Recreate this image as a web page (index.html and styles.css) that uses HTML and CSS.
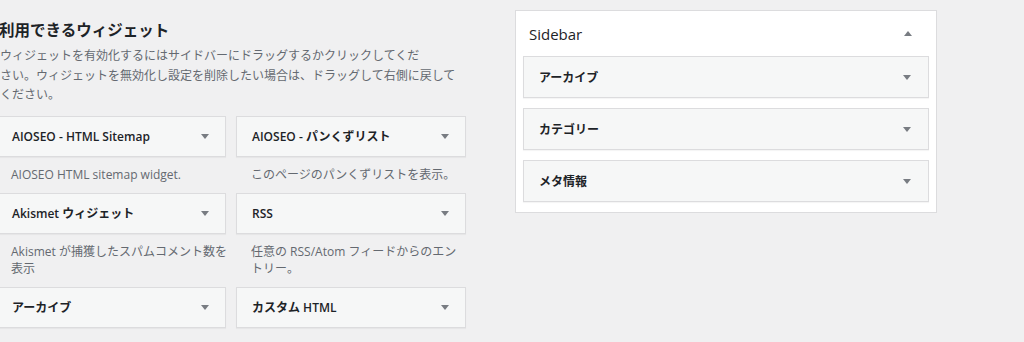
FILE: index.html
```html
<!DOCTYPE html>
<html lang="ja">
<head>
    <meta charset="UTF-8">
    <meta name="viewport" content="width=device-width, initial-scale=1.0">
    <title>ウィジェット</title>
    <link rel="stylesheet" href="styles.css">
</head>
<body>
    <div class="wrap">
        <div class="available">
            <h2 class="section-title">利用できるウィジェット</h2>
            <p class="section-desc">ウィジェットを有効化するにはサイドバーにドラッグするかクリックしてくだ<br>さい。ウィジェットを無効化し設定を削除したい場合は、ドラッグして右側に戻して<br>ください。</p>

            <div class="widget-grid">
                <div class="widget">
                    <div class="widget-top"><span class="widget-name">AIOSEO - HTML Sitemap</span><span class="caret"></span></div>
                    <div class="widget-desc">AIOSEO HTML sitemap widget.</div>
                </div>
                <div class="widget">
                    <div class="widget-top"><span class="widget-name">AIOSEO - パンくずリスト</span><span class="caret"></span></div>
                    <div class="widget-desc">このページのパンくずリストを表示。</div>
                </div>
                <div class="widget">
                    <div class="widget-top"><span class="widget-name">Akismet ウィジェット</span><span class="caret"></span></div>
                    <div class="widget-desc">Akismet が捕獲したスパムコメント数を<br>表示</div>
                </div>
                <div class="widget">
                    <div class="widget-top"><span class="widget-name">RSS</span><span class="caret"></span></div>
                    <div class="widget-desc">任意の RSS/Atom フィードからのエン<br>トリー。</div>
                </div>
                <div class="widget">
                    <div class="widget-top"><span class="widget-name">アーカイブ</span><span class="caret"></span></div>
                </div>
                <div class="widget">
                    <div class="widget-top"><span class="widget-name">カスタム HTML</span><span class="caret"></span></div>
                </div>
            </div>
        </div>

        <div class="sidebar-panel">
            <div class="sidebar-head">
                <span class="sidebar-name">Sidebar</span>
                <span class="caret up"></span>
            </div>
            <div class="widget-top in-sidebar"><span class="widget-name">アーカイブ</span><span class="caret"></span></div>
            <div class="widget-top in-sidebar"><span class="widget-name">カテゴリー</span><span class="caret"></span></div>
            <div class="widget-top in-sidebar"><span class="widget-name">メタ情報</span><span class="caret"></span></div>
        </div>
    </div>
</body>
</html>
```

FILE: styles.css
```css
html, body {
    margin: 0;
    height: 342px;
    overflow: hidden;
    background-color: #f0f0f1;
    color: #1d2327;
    font-family: "Open Sans", "Noto Sans CJK JP", sans-serif;
}
.wrap {
    display: flex;
    align-items: flex-start;
    gap: 49px;
    margin-left: -4px;
}
.available {
    width: 470px;
    flex-shrink: 0;
    padding-top: 18px;
}
.section-title {
    margin: 0 0 4px 3px;
    font-size: 15.5px;
    font-weight: 700;
    line-height: 24px;
}
.section-desc {
    margin: 0 0 11px 4px;
    font-size: 12px;
    line-height: 19.5px;
    color: #646970;
    white-space: nowrap;
}
.widget-grid {
    display: grid;
    grid-template-columns: 230px 230px;
    column-gap: 10px;
}
.widget-top {
    display: flex;
    align-items: center;
    justify-content: space-between;
    height: 39px;
    padding: 0 15px 0 15px;
    background-color: #f6f7f7;
    border: 1px solid #dcdcde;
    box-shadow: 0 1px 1px rgba(0, 0, 0, 0.04);
}
.widget-name {
    font-size: 12px;
    font-weight: 600;
    white-space: nowrap;
}
.caret {
    width: 0;
    height: 0;
    margin-right: 1px;
    border-left: 4px solid transparent;
    border-right: 4px solid transparent;
    border-top: 5px solid #787c82;
}
.caret.up {
    border-top: 0;
    border-bottom: 5px solid #787c82;
}
.widget-desc {
    padding: 9px 0 10px 15px;
    font-size: 12px;
    line-height: 17px;
    color: #646970;
    white-space: nowrap;
}
.sidebar-panel {
    width: 406px;
    flex-shrink: 0;
    margin-top: 10px;
    padding: 0 7px 10px 7px;
    background-color: #fff;
    border: 1px solid #dcdcde;
    display: flex;
    flex-direction: column;
    gap: 10px;
}
.sidebar-head {
    display: flex;
    align-items: center;
    justify-content: space-between;
    height: 45px;
    margin-bottom: -10px;
    padding: 0 16px 0 6px;
}
.sidebar-name {
    font-size: 15px;
}
.widget-top.in-sidebar {
    height: 40px;
    padding-right: 16px;
}
```
